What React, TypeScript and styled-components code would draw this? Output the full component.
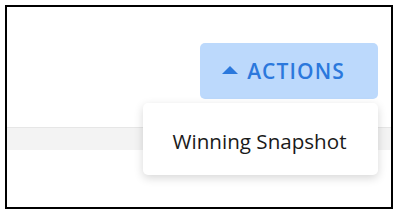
import styled, { createGlobalStyle } from 'styled-components'

const GlobalStyle = createGlobalStyle`
  body {
    margin: 0;
    background: #ffffff;
    font-family: 'Open Sans', 'Liberation Sans', sans-serif;
  }
`

const Frame = styled.div`
  box-sizing: border-box;
  margin: 5px 0 0 5px;
  width: 388px;
  height: 204px;
  border: 2px solid #000000;
  padding-top: 36px;
  overflow: hidden;
`

const Toolbar = styled.div`
  display: flex;
  justify-content: flex-end;
  padding-right: 13px;
`

const ActionsWrapper = styled.div`
  position: relative;
`

const ActionsButton = styled.button`
  display: flex;
  align-items: center;
  justify-content: center;
  gap: 9px;
  width: 178px;
  height: 56px;
  border: none;
  border-radius: 5px;
  background: #bcd9fc;
  color: #2b78dc;
  font-family: 'Open Sans', 'Liberation Sans', sans-serif;
  font-size: 21px;
  font-weight: 600;
  letter-spacing: 1.1px;
  padding: 0 11px 0 0;
  cursor: pointer;
`

const Caret = styled.span`
  width: 0;
  height: 0;
  border-left: 8px solid transparent;
  border-right: 8px solid transparent;
  border-bottom: 8px solid #2b78dc;
  margin-top: -2px;
`

const Menu = styled.ul`
  position: absolute;
  top: calc(100% + 4px);
  right: 0;
  z-index: 2;
  box-sizing: border-box;
  width: 235px;
  height: 72px;
  margin: 0;
  padding: 3px 0 0;
  list-style: none;
  background: #ffffff;
  border-radius: 5px;
  box-shadow: 0 3px 10px rgba(0, 0, 0, 0.16);
  display: flex;
  align-items: center;
`

const MenuItem = styled.li`
  flex: 1;
  text-align: center;
  font-size: 20.6px;
  color: #1a1a1a;
  padding-right: 2px;
`

const Band = styled.div`
  margin-top: 28px;
  height: 22px;
  background: #f3f3f3;
  border-top: 1px solid #e6e6e6;
`

export default function App(): JSX.Element {
  return (
    <>
      <GlobalStyle />
      <Frame>
        <Toolbar>
          <ActionsWrapper>
            <ActionsButton>
              <Caret />
              ACTIONS
            </ActionsButton>
            <Menu>
              <MenuItem>Winning Snapshot</MenuItem>
            </Menu>
          </ActionsWrapper>
        </Toolbar>
        <Band />
      </Frame>
    </>
  )
}
